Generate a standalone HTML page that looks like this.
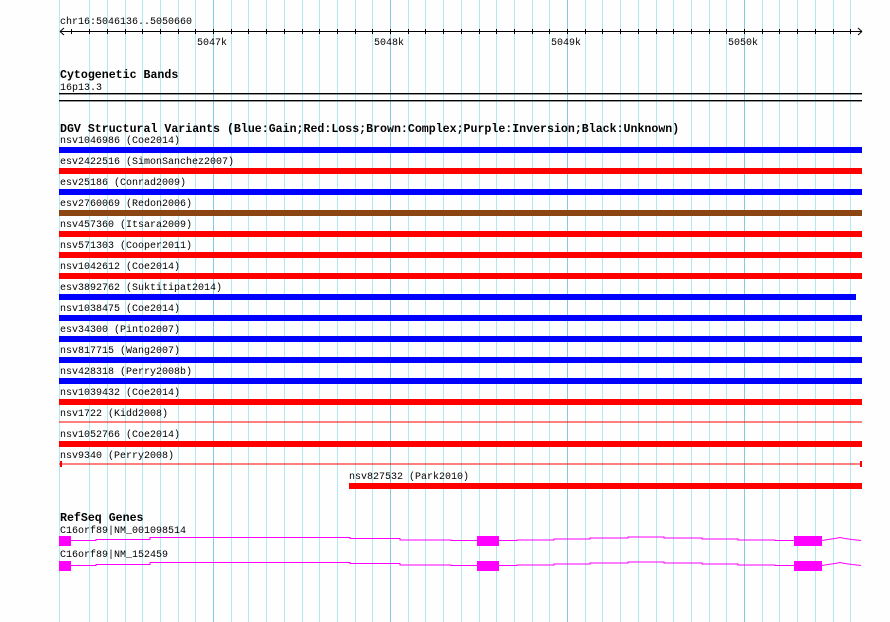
<!DOCTYPE html>
<html><head><meta charset="utf-8"><style>
html,body{margin:0;padding:0;background:#fdfefd;}
svg{display:block}
text{font-family:"Liberation Mono","DejaVu Sans Mono",monospace;font-size:10px;fill:#000}
.b{font-weight:bold;font-size:11.6px}
</style></head><body>
<svg width="890" height="622" viewBox="0 0 890 622" xmlns="http://www.w3.org/2000/svg">
<rect width="890" height="622" fill="#fdfefd"/>
<g id="grid" stroke="#aeeaf0" stroke-width="1">
<line x1="59.5" y1="0" x2="59.5" y2="622"/>
</g>
<script>
(function(){
var ns="http://www.w3.org/2000/svg",g=document.getElementById('grid');
for(var i=-7;i<=36;i++){var x=Math.round(213+17.7*i)+0.5;if(x<85||x>852)continue;
var l=document.createElementNS(ns,'line');l.setAttribute('x1',x);l.setAttribute('x2',x);l.setAttribute('y1',0);l.setAttribute('y2',622);
if(i%10==0)l.setAttribute('stroke','#86c8e0');g.appendChild(l);}
})();
</script>
<!-- ruler -->
<text x="60" y="24">chr16:5046136..5050660</text>
<line x1="60" y1="31.5" x2="862" y2="31.5" stroke="#000"/>
<path d="M60 31.5 L64 28 M60 31.5 L64 35 M862 31.5 L858 28 M862 31.5 L858 35" stroke="#000" fill="none"/>
<g id="ticks" stroke="#000"></g>
<script>
(function(){
var ns="http://www.w3.org/2000/svg",g=document.getElementById('ticks');
for(var i=-8;i<=36;i++){var x=Math.round(213+17.7*i)+0.5;if(x<62||x>860)continue;
var l=document.createElementNS(ns,'line');l.setAttribute('x1',x);l.setAttribute('x2',x);l.setAttribute('y1',29);l.setAttribute('y2',34);g.appendChild(l);}
})();
</script>
<text x="197" y="45">5047k</text>
<text x="374" y="45">5048k</text>
<text x="551" y="45">5049k</text>
<text x="728" y="45">5050k</text>
<!-- cytoband -->
<text class="b" x="60" y="78">Cytogenetic Bands</text>
<text x="60" y="90">16p13.3</text>
<rect x="59" y="93" width="803" height="1.4" fill="#000"/>
<rect x="59" y="100" width="803" height="1.4" fill="#000"/>
<!-- DGV -->
<text class="b" x="60" y="132">DGV Structural Variants (Blue:Gain;Red:Loss;Brown:Complex;Purple:Inversion;Black:Unknown)</text>
<text x="60" y="143">nsv1046986 (Coe2014)</text><rect x="59" y="147" width="803" height="6" fill="#0000ff"/>
<text x="60" y="164">esv2422516 (SimonSanchez2007)</text><rect x="59" y="168" width="803" height="6" fill="#ff0000"/>
<text x="60" y="185">esv25186 (Conrad2009)</text><rect x="59" y="189" width="803" height="6" fill="#0000ff"/>
<text x="60" y="206">esv2760069 (Redon2006)</text><rect x="59" y="210" width="803" height="6" fill="#8b4513"/>
<text x="60" y="227">nsv457360 (Itsara2009)</text><rect x="59" y="231" width="803" height="6" fill="#ff0000"/>
<text x="60" y="248">nsv571303 (Cooper2011)</text><rect x="59" y="252" width="803" height="6" fill="#ff0000"/>
<text x="60" y="269">nsv1042612 (Coe2014)</text><rect x="59" y="273" width="803" height="6" fill="#ff0000"/>
<text x="60" y="290">esv3892762 (Suktitipat2014)</text><rect x="59" y="294" width="797" height="6" fill="#0000ff"/>
<text x="60" y="311">nsv1038475 (Coe2014)</text><rect x="59" y="315" width="803" height="6" fill="#0000ff"/>
<text x="60" y="332">esv34300 (Pinto2007)</text><rect x="59" y="336" width="803" height="6" fill="#0000ff"/>
<text x="60" y="353">nsv817715 (Wang2007)</text><rect x="59" y="357" width="803" height="6" fill="#0000ff"/>
<text x="60" y="374">nsv428318 (Perry2008b)</text><rect x="59" y="378" width="803" height="6" fill="#0000ff"/>
<text x="60" y="395">nsv1039432 (Coe2014)</text><rect x="59" y="399" width="803" height="6" fill="#ff0000"/>
<text x="60" y="416">nsv1722 (Kidd2008)</text><rect x="59" y="421.5" width="803" height="1" fill="#ff0000"/>
<text x="60" y="437">nsv1052766 (Coe2014)</text><rect x="59" y="441" width="803" height="6" fill="#ff0000"/>
<text x="60" y="458">nsv9340 (Perry2008)</text><rect x="59" y="463.5" width="803" height="1" fill="#ff0000"/>
<rect x="60" y="461" width="2" height="6" fill="#ff0000"/><rect x="860" y="461" width="2" height="6" fill="#ff0000"/>
<text x="349" y="479">nsv827532 (Park2010)</text><rect x="349" y="483" width="513" height="6" fill="#ff0000"/>
<!-- RefSeq -->
<text class="b" x="60" y="521">RefSeq Genes</text>
<text x="60" y="533">C16orf89|NM_001098514</text>
<text x="60" y="557">C16orf89|NM_152459</text>
<g fill="none" stroke="#ff00ff" stroke-width="1">
<polyline id="intr" points="71,540.5 96,540.5 96,539.5 150,539.5 150,537.5 350,537.5 350,538.5 400,538.5 400,539.5 451,539.5 451,540.5 477,540.5 M"/>
</g>
<g id="genes"></g>
<script>
(function(){
var ns="http://www.w3.org/2000/svg",g=document.getElementById('genes');
document.getElementById('intr').remove();
var pts=[[71,540],[96,540],[96,539],[150,539],[150,537],[350,537],[350,538],[400,538],[400,539.5],[451,539.5],[451,540],[499,540],[517,540],[517,539.5],[554,539.5],[554,538.5],[590,538.5],[590,537.5],[628,537.5],[628,536.5],[664,536.5],[664,537.5],[702,537.5],[702,538.5],[738,538.5],[738,539.5],[775,539.5],[775,540],[822,540],[828,539],[835,538],[840,537],[845,538],[852,539],[861,540]];
[0,25].forEach(function(dy){
var p=document.createElementNS(ns,'polyline');
p.setAttribute('points',pts.map(function(q){return q[0]+','+(q[1]+dy+0.5)}).join(' '));
p.setAttribute('fill','none');p.setAttribute('stroke','#ff00ff');g.appendChild(p);
[[59,71],[477,499],[794,822]].forEach(function(e){
var r=document.createElementNS(ns,'rect');r.setAttribute('x',e[0]);r.setAttribute('y',536+dy);r.setAttribute('width',e[1]-e[0]);r.setAttribute('height',10);r.setAttribute('fill','#ff00ff');g.appendChild(r);});
});
})();
</script>
</svg>
</body></html>
